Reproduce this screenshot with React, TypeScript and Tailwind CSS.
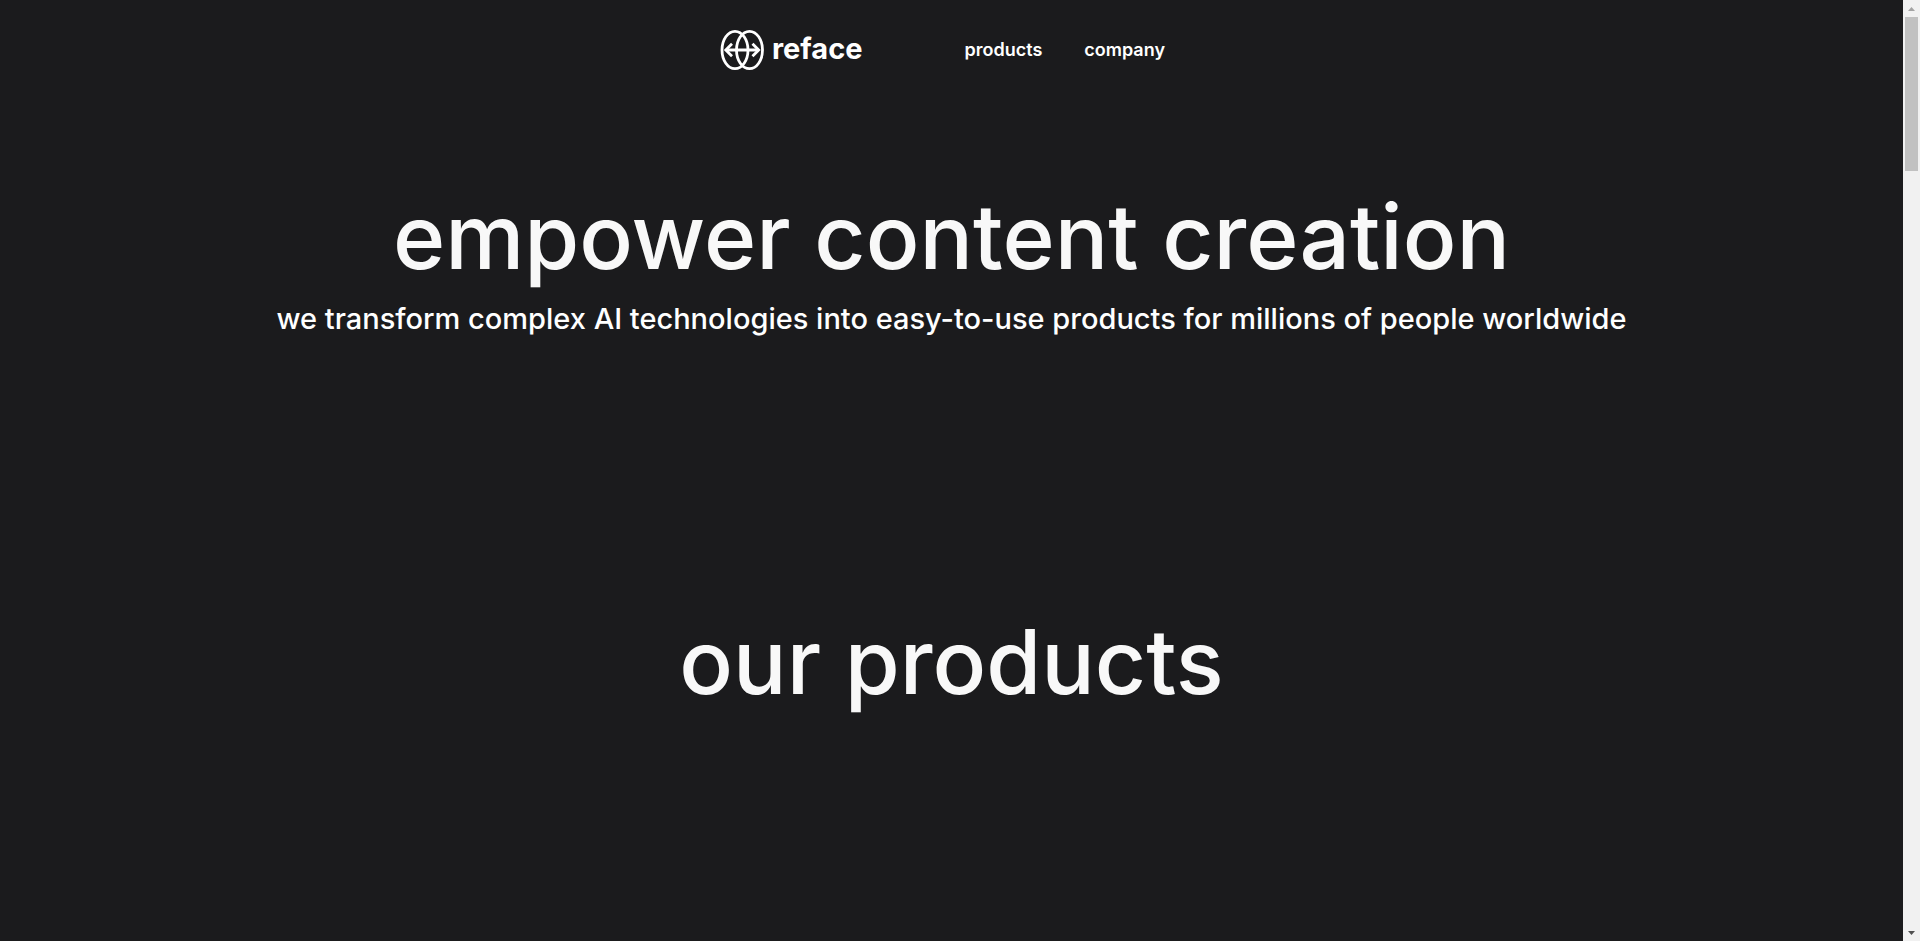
interface NavItem {
  label: string
  href: string
}

const navItems: NavItem[] = [
  { label: 'products', href: '#products' },
  { label: 'company', href: '#company' },
]

function LogoMark() {
  return (
    <svg
      viewBox="0 0 44 42"
      className="h-[42px] w-11"
      fill="none"
      stroke="currentColor"
      strokeWidth="2.8"
      aria-hidden="true"
    >
      <ellipse cx="15" cy="21" rx="13" ry="18.7" />
      <ellipse cx="29.5" cy="21" rx="13" ry="18.7" />
      <path d="M6 21H39" />
      <path d="M12 14.8L5.8 21L12 27.2M32.5 14.8L38.7 21L32.5 27.2" />
    </svg>
  )
}

function Header() {
  return (
    <header className="flex h-[100px] items-center justify-center">
      <a href="#top" className="flex items-center gap-2">
        <LogoMark />
        <span className="pb-0.5 text-[29px] leading-9 font-bold">reface</span>
      </a>
      <nav className="ml-[102px] flex gap-[42px] pr-[18px]">
        {navItems.map((item) => (
          <a key={item.label} href={item.href} className="text-lg leading-6 font-semibold">
            {item.label}
          </a>
        ))}
      </nav>
    </header>
  )
}

function Scrollbar() {
  return (
    <div className="sticky top-0 flex h-screen w-[17px] shrink-0 flex-col items-center bg-[#f1f1f1]" aria-hidden="true">
      <svg viewBox="0 0 17 17" className="size-[17px] shrink-0" fill="#a3a3a3">
        <path d="M5 11L8.5 7L12 11Z" />
      </svg>
      <div className="h-[154px] w-[13px] bg-[#c1c1c1]" />
      <svg viewBox="0 0 17 17" className="mt-auto size-[17px] shrink-0" fill="#505050">
        <path d="M5 7L8.5 11L12 7Z" />
      </svg>
    </div>
  )
}

export default function App() {
  return (
    <div id="top" className="flex min-h-screen bg-[#1b1b1d] font-['Inter',sans-serif] text-white">
      <div className="min-w-0 flex-1">
        <Header />
        <main className="text-center text-[#f8f8f8]">
          <section className="pt-[87px]">
            <h1 className="text-[89px] leading-[100px] font-medium">empower content creation</h1>
            <p className="mt-3.5 text-[29px] leading-9 font-medium text-white">
              we transform complex AI technologies into easy-to-use products for millions of people worldwide
            </p>
          </section>
          <section id="products" className="pt-[275px]">
            <h2 className="text-[89px] leading-[100px] font-medium">our products</h2>
          </section>
        </main>
      </div>
      <Scrollbar />
    </div>
  )
}
